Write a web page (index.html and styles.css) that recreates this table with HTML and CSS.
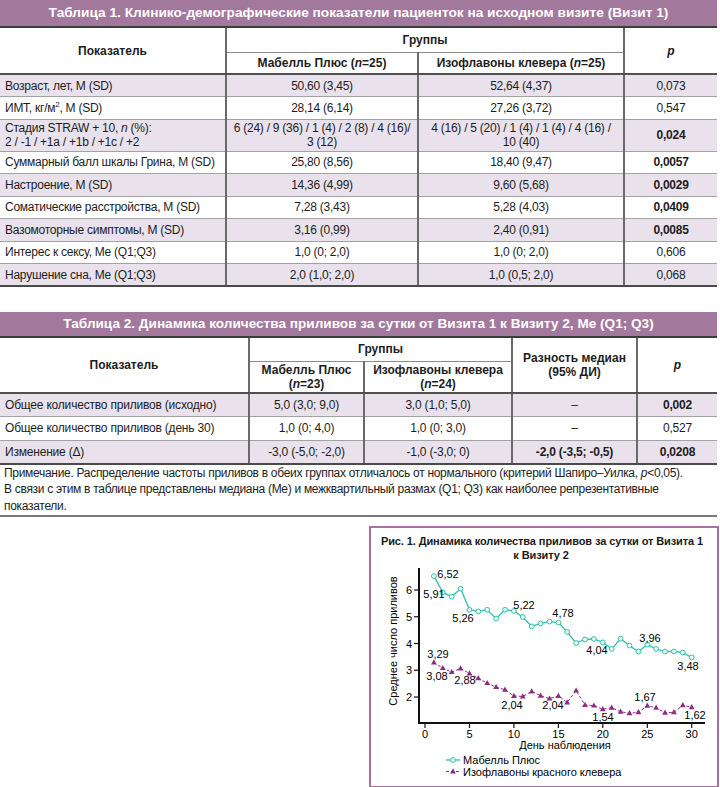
FILE: index.html
```html
<!DOCTYPE html>
<html lang="ru">
<head>
    <meta charset="UTF-8">
    <meta name="viewport" content="width=device-width, initial-scale=1.0">
    <title>Таблицы</title>
    <link rel="stylesheet" href="styles.css">
</head>
<body>
<div class="page">
    <div class="caption">Таблица 1. Клинико-демографические показатели пациенток на исходном визите (Визит 1)</div>
    <table class="data t1">
        <colgroup><col style="width:226px"><col style="width:192px"><col style="width:206px"><col></colgroup>
        <thead>
            <tr class="h1"><th rowspan="2" class="name">Показатель</th><th colspan="2">Группы</th><th rowspan="2" class="pv"><i>p</i></th></tr>
            <tr class="h2"><th>Мабелль Плюс (<i>n</i>=25)</th><th>Изофлавоны клевера (<i>n</i>=25)</th></tr>
        </thead>
        <tbody>
            <tr class="alt"><td class="name">Возраст, лет, M (SD)</td><td>50,60 (3,45)</td><td>52,64 (4,37)</td><td>0,073</td></tr>
            <tr><td class="name">ИМТ, кг/м<sup>2</sup>, M (SD)</td><td>28,14 (6,14)</td><td>27,26 (3,72)</td><td>0,547</td></tr>
            <tr class="alt tall"><td class="name">Стадия STRAW + 10, <i>n</i> (%):<br>2 / -1 / +1a / +1b / +1c / +2</td><td>6 (24) / 9 (36) / 1 (4) / 2 (8) / 4 (16)/<br>3 (12)</td><td>4 (16) / 5 (20) / 1 (4) / 1 (4) / 4 (16) /<br>10 (40)</td><td><b>0,024</b></td></tr>
            <tr><td class="name">Суммарный балл шкалы Грина, M (SD)</td><td>25,80 (8,56)</td><td>18,40 (9,47)</td><td><b>0,0057</b></td></tr>
            <tr class="alt"><td class="name">Настроение, M (SD)</td><td>14,36 (4,99)</td><td>9,60 (5,68)</td><td><b>0,0029</b></td></tr>
            <tr><td class="name">Соматические расстройства, M (SD)</td><td>7,28 (3,43)</td><td>5,28 (4,03)</td><td><b>0,0409</b></td></tr>
            <tr class="alt"><td class="name">Вазомоторные симптомы, M (SD)</td><td>3,16 (0,99)</td><td>2,40 (0,91)</td><td><b>0,0085</b></td></tr>
            <tr><td class="name">Интерес к сексу, Me (Q1;Q3)</td><td>1,0 (0; 2,0)</td><td>1,0 (0; 2,0)</td><td>0,606</td></tr>
            <tr class="alt"><td class="name">Нарушение сна, Me (Q1;Q3)</td><td>2,0 (1,0; 2,0)</td><td>1,0 (0,5; 2,0)</td><td>0,068</td></tr>
        </tbody>
    </table>

    <div class="caption second">Таблица 2. Динамика количества приливов за сутки от Визита 1 к Визиту 2, Me (Q1; Q3)</div>
    <table class="data t2">
        <colgroup><col style="width:249px"><col style="width:115px"><col style="width:148px"><col style="width:125px"><col></colgroup>
        <thead>
            <tr class="h1"><th rowspan="2" class="name">Показатель</th><th colspan="2">Группы</th><th rowspan="2">Разность медиан<br>(95% ДИ)</th><th rowspan="2" class="pv"><i>p</i></th></tr>
            <tr class="h2"><th>Мабелль Плюс<br>(<i>n</i>=23)</th><th>Изофлавоны клевера<br>(<i>n</i>=24)</th></tr>
        </thead>
        <tbody>
            <tr class="alt"><td class="name">Общее количество приливов (исходно)</td><td>5,0 (3,0; 9,0)</td><td>3,0 (1,0; 5,0)</td><td>–</td><td><b>0,002</b></td></tr>
            <tr><td class="name">Общее количество приливов (день 30)</td><td>1,0 (0; 4,0)</td><td>1,0 (0; 3,0)</td><td>–</td><td>0,527</td></tr>
            <tr class="alt"><td class="name">Изменение (Δ)</td><td>-3,0 (-5,0; -2,0)</td><td>-1,0 (-3,0; 0)</td><td><b>-2,0 (-3,5; -0,5)</b></td><td><b>0,0208</b></td></tr>
        </tbody>
    </table>
    <p class="note">Примечание. Распределение частоты приливов в обеих группах отличалось от нормального (критерий Шапиро–Уилка, <i>p</i>&lt;0,05).<br>В связи с этим в таблице представлены медиана (Me) и межквартильный размах (Q1; Q3) как наиболее репрезентативные<br>показатели.</p>

    <div class="figure">
        <svg viewBox="371 525 346 258" xmlns="http://www.w3.org/2000/svg">
            <defs>
                <marker id="dot" viewBox="-4 -4 8 8" markerWidth="8" markerHeight="8" markerUnits="userSpaceOnUse">
                    <circle r="2.4" fill="#e8f9f6" stroke="#33c2ad" stroke-width="1"/>
                </marker>
                <marker id="tri" viewBox="-4 -4 8 8" markerWidth="8" markerHeight="8" markerUnits="userSpaceOnUse">
                    <path d="M0,-3.2 L2.9,2 L-2.9,2 Z" fill="#8c2d83"/>
                </marker>
            </defs>

            <text class="ttl" x="542" y="542">Рис. 1. Динамика количества приливов за сутки от Визита 1</text>
            <text class="ttl" x="541" y="556">к Визиту 2</text>

            <!-- axes -->
            <line x1="419" y1="565" x2="419" y2="721" class="axis"/>
            <line x1="418" y1="720" x2="705" y2="720" class="axis"/>
            <g class="tick">
                <line x1="414" y1="587" x2="419" y2="587"/>
                <line x1="414" y1="613.75" x2="419" y2="613.75"/>
                <line x1="414" y1="640.5" x2="419" y2="640.5"/>
                <line x1="414" y1="667.25" x2="419" y2="667.25"/>
                <line x1="414" y1="694" x2="419" y2="694"/>
                <line x1="425" y1="720" x2="425" y2="725"/>
                <line x1="469.5" y1="720" x2="469.5" y2="725"/>
                <line x1="513.9" y1="720" x2="513.9" y2="725"/>
                <line x1="558.4" y1="720" x2="558.4" y2="725"/>
                <line x1="602.8" y1="720" x2="602.8" y2="725"/>
                <line x1="647.3" y1="720" x2="647.3" y2="725"/>
                <line x1="691.7" y1="720" x2="691.7" y2="725"/>
            </g>
            <g class="ylab">
                <text x="412" y="591">6</text>
                <text x="412" y="618">5</text>
                <text x="412" y="644.5">4</text>
                <text x="412" y="671">3</text>
                <text x="412" y="698">2</text>
            </g>
            <g class="xlab">
                <text x="425" y="735">0</text>
                <text x="469.5" y="735">5</text>
                <text x="513.9" y="735">10</text>
                <text x="558.4" y="735">15</text>
                <text x="602.8" y="735">20</text>
                <text x="647.3" y="735">25</text>
                <text x="691.7" y="735">30</text>
            </g>
            <text class="axtitle" x="565" y="746">День наблюдения</text>
            <text class="axtitle" transform="translate(397 638) rotate(-90)">Среднее число приливов</text>

            <!-- Мабелль Плюс -->
            <polyline class="s1" points="433.9,573.1 442.8,589.4 451.7,593.7 460.6,585.7 469.5,606.8 478.3,608.4 487.2,606.8 496.1,615.6 505,606.8 513.9,607.9 522.8,614 531.7,623.4 540.6,620.4 549.5,618.6 558.4,619.6 567.2,629 576.1,640 585,636.5 593.9,636 602.8,639.4 611.7,645.9 620.6,635.7 629.5,642.6 638.4,648.5 647.3,641.6 656.1,645.9 665,648.5 673.9,648.5 682.8,649.6 691.7,654.4"/>
            <!-- Изофлавоны красного клевера -->
            <polyline class="s2" points="433.9,659.5 442.8,665.1 451.7,669.1 460.6,665.4 469.5,670.5 478.3,675.3 487.2,680.1 496.1,684.1 505,686.8 513.9,692.9 522.8,693.5 531.7,688.4 540.6,692.7 549.5,695.6 558.4,692.9 567.2,699.4 576.1,687.6 585,702 593.9,702.6 602.8,706.3 611.7,704.7 620.6,708.7 629.5,710.3 638.4,709.3 647.3,702.8 656.1,704.7 665,709.8 673.9,709.3 682.8,702.3 691.7,704.2"/>

            <g class="vals">
                <text x="448" y="575">6,52</text>
                <text x="434" y="595">5,91</text>
                <text x="463" y="619">5,26</text>
                <text x="524" y="606">5,22</text>
                <text x="563" y="614">4,78</text>
                <text x="597" y="651">4,04</text>
                <text x="650" y="639">3,96</text>
                <text x="688" y="667">3,48</text>
                <text x="438" y="655">3,29</text>
                <text x="437" y="677">3,08</text>
                <text x="465" y="681">2,88</text>
                <text x="512" y="706">2,04</text>
                <text x="553" y="706">2,04</text>
                <text x="603" y="718">1,54</text>
                <text x="645" y="698">1,67</text>
                <text x="695" y="716">1,62</text>
            </g>

            <!-- legend -->
            <polyline class="s1" points="446,757 453,757 460,757" style="marker-start:none;marker-end:none"/>
            <text class="leg" x="463" y="761">Мабелль Плюс</text>
            <polyline class="s2" points="446,768.5 453,768.5 460,768.5" style="marker-start:none;marker-end:none"/>
            <text class="leg" x="463" y="772.5">Изофлавоны красного клевера</text>
        </svg>
    </div>
</div>
</body>
</html>
```

FILE: styles.css
```css
* {
    margin: 0;
    padding: 0;
    box-sizing: border-box;
}

body {
    font-family: "Liberation Sans", Arial, sans-serif;
    color: #1d1d1d;
    background: #fff;
}

.page {
    width: 717px;
}

.caption {
    height: 28px;
    line-height: 26px;
    background: #a3789d;
    color: #fff;
    font-size: 13.7px;
    font-weight: bold;
    text-align: center;
    border-bottom: 2px solid #3c3c3c;
}

.caption.second {
    margin-top: 25px;
    height: 26px;
    line-height: 24px;
    font-size: 13.6px;
}

.data {
    width: 100%;
    border-collapse: collapse;
    table-layout: fixed;
    font-size: 12px;
}

.data th,
.data td {
    border-left: 2px solid #6a6a6a;
    border-top: 1px solid #a2a2a2;
    text-align: center;
    vertical-align: middle;
    line-height: 14px;
}

.data th {
    font-weight: bold;
    border-top: none;
}

.data .h2 th {
    border-top: 1px solid #8c8c8c;
}

.data thead tr:last-child th,
.data thead th[rowspan] {
    border-bottom: 2px solid #505050;
}

.data .name {
    border-left: none;
    text-align: left;
    padding-left: 5px;
}

.data th.name {
    text-align: center;
    padding-left: 0;
}

.data tbody tr:last-child td {
    border-bottom: 2px solid #4a4a4a;
}

.data .alt td {
    background: #e9e1eb;
}

.data sup {
    font-size: 8px;
    line-height: 0;
}

.t1 .h1 {
    height: 24px;
}

.t1 .h2 {
    height: 22px;
}

.t1 tbody tr {
    height: 22.5px;
}

.t1 tbody tr.tall {
    height: 32px;
}

.t1 tbody td {
    letter-spacing: -0.25px;
}

.t2 .h1 {
    height: 23px;
}

.t2 .h2 {
    height: 32px;
}

.t2 tbody tr {
    height: 23.5px;
}

.t2 tbody td {
    letter-spacing: -0.2px;
}

.note {
    font-size: 12px;
    letter-spacing: -0.3px;
    line-height: 16.5px;
    padding: 0 4px 1px 4px;
    border-bottom: 2px solid #7a7a7a;
    white-space: nowrap;
}

.figure {
    margin: 9px 0 0 369px;
    width: 350px;
    height: 262px;
    border: 2px solid #a6709f;
}

.figure svg {
    display: block;
    width: 346px;
    height: 258px;
    font-family: "Liberation Sans", Arial, sans-serif;
}

.ttl {
    font-size: 11px;
    font-weight: bold;
    letter-spacing: -0.1px;
    text-anchor: middle;
    fill: #1a1a1a;
}

.axis {
    stroke: #111;
    stroke-width: 2;
}

.tick line {
    stroke: #111;
    stroke-width: 1.2;
}

.ylab text {
    font-size: 11px;
    text-anchor: end;
}

.xlab text,
.vals text {
    font-size: 11px;
    text-anchor: middle;
}

.axtitle {
    font-size: 11px;
    text-anchor: middle;
}

.leg {
    font-size: 11px;
}

.s1 {
    fill: none;
    stroke: #33c2ad;
    stroke-width: 1.3;
    marker-start: url(#dot);
    marker-mid: url(#dot);
    marker-end: url(#dot);
}

.s2 {
    fill: none;
    stroke: #8c2d83;
    stroke-width: 1;
    stroke-dasharray: 3 2;
    marker-start: url(#tri);
    marker-mid: url(#tri);
    marker-end: url(#tri);
}
```
